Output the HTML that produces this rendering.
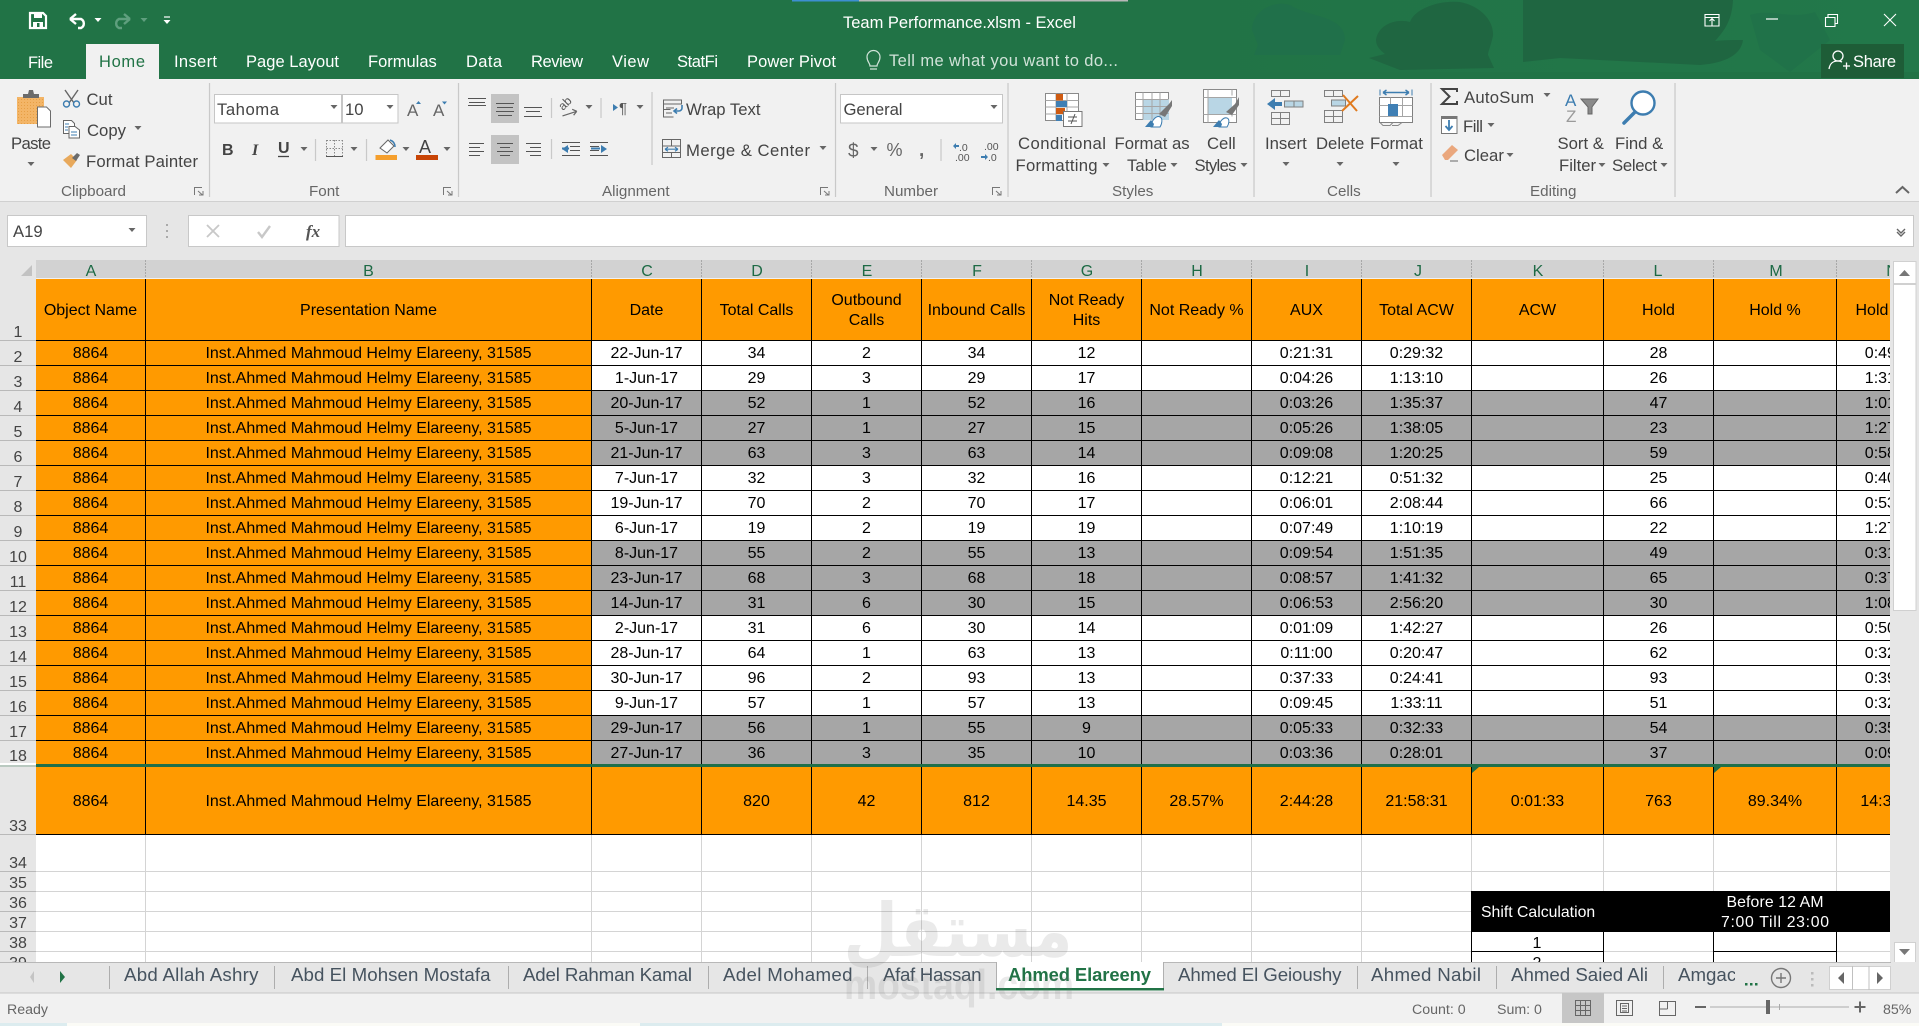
<!DOCTYPE html>
<html><head><meta charset="utf-8"><title>Team Performance.xlsm - Excel</title>
<style>
html,body{margin:0;padding:0;width:1919px;height:1026px;overflow:hidden;background:#f1f1f1}
svg{position:absolute;left:0;top:0;display:block}
svg text{font-family:"Liberation Sans",sans-serif;white-space:pre}
.w{fill:#fff;font-size:16.5px}
.r{fill:#444;font-size:16.7px}
.g{fill:#666;font-size:15.2px}
.n{fill:#444;font-size:16px;text-anchor:middle}
.h{fill:#1d6a45;font-size:16px;text-anchor:middle}
.t{fill:#46535f;font-size:18.7px}
.s{fill:#666;font-size:14.2px}
.m{text-anchor:middle}
#g{position:absolute;left:36px;top:279px;width:1854px;height:683px;overflow:hidden;background:#fff}
table{border-collapse:separate;border-spacing:0;table-layout:fixed;position:absolute;left:0;width:1911px;font:16px "Liberation Sans",sans-serif;color:#000}
td{box-sizing:border-box;padding:2px 0 0;text-align:center;vertical-align:middle;border-right:1px solid #000;border-bottom:1px solid #000;overflow:hidden;white-space:nowrap;line-height:20px}
tr.o td{background:#ff9a00}
td.o{background:#ff9a00}
tr.x td{background:#a6a6a6}
tr.x td.o{background:#ff9a00}
tr.p td{height:25px}
#t2 td{border-color:#d4d4d4}
</style></head><body>
<svg width="1919" height="1026" viewBox="0 0 1919 1026">
<defs>
<path id="c" d="M-3.5-2h7L0 2z"/>
<pattern id="st" width="3" height="3" patternUnits="userSpaceOnUse"><rect width="3" height="3" fill="#f3b567"/><rect width="1" height="1" fill="#e79f45"/></pattern>
<linearGradient id="tb" x1="0" x2="1" y1="0" y2="0"><stop offset="0" stop-color="#217346"/><stop offset="1" stop-color="#22784a"/></linearGradient>
</defs>
<!-- chrome backgrounds -->
<rect width="1919" height="79" fill="#217346"/>
<rect x="1200" width="719" height="72" fill="url(#tb)"/>
<path d="M1252 30C1252 10 1275 0 1290 5 1310 18 1345 15 1345 40L1340 55H1254L1258 45z" fill="#20704a"/>
<path d="M1376 40C1378 25 1395 18 1410 22 1415 8 1440 0 1460 2 1480 6 1494 20 1493 36 1490 48 1488 52 1488 55L1494 68 1400 70 1369 58 1385 54C1380 50 1376 46 1376 40zM1523 0H1733C1732 20 1725 30 1715 41 1725 40 1735 40 1743 40 1741 55 1725 63 1700 65L1560 58 1523 62z" fill="#1f6641"/>
<path d="M1750 15C1770 8 1790 20 1815 12L1830 40 1790 72 1760 50z" fill="#20704a" opacity=".6"/>
<rect x="792" y="0" width="67" height="1.5" fill="#3d8fd1"/><rect x="859" y="0" width="269" height="1.5" fill="#b8b8b8"/>
<rect y="79" width="1919" height="122" fill="#f1f1f1"/>
<rect y="201" width="1919" height="1.5" fill="#d0d0d0"/>
<rect y="202" width="1919" height="76" fill="#e6e6e6"/>
<rect x="86" y="44" width="73" height="35" fill="#f1f1f1"/>
<rect x="1821" y="44" width="83" height="34" fill="#1e5d37"/>

<!-- quick access -->
<path d="M30 13h13l3 3v12H30z" fill="none" stroke="#fff" stroke-width="2.2"/><rect x="34" y="13" width="8" height="5" fill="#fff"/><rect x="33" y="22" width="10" height="6" fill="#fff"/><rect x="37" y="23" width="2.5" height="4" fill="#217346"/>
<path d="M70 19l6-5M70 19l6 5M70 19h11a5 5 0 0 1 0 9h-3" fill="none" stroke="#fff" stroke-width="2.4"/>
<use href="#c" x="98" y="20" fill="#fff"/>
<path d="M130 19l-6-5M130 19l-6 5M130 19h-11a5 5 0 0 0 0 9h3" fill="none" stroke="#5f9f7e" stroke-width="2.4"/>
<use href="#c" x="144" y="20" fill="#5f9f7e"/>
<path d="M164 17h6" stroke="#fff" stroke-width="1.2"/><use href="#c" x="167" y="22" fill="#fff"/>
<text class="w" x="843" y="28">Team Performance.xlsm - Excel</text>
<!-- window buttons -->
<path d="M1705 14.5h14v11.5h-14zM1705 17.5h14M1712 26v-7M1709.5 21l2.5-2.5 2.5 2.5" fill="none" stroke="#fff" stroke-width="1.1"/>
<path d="M1766 19h12" stroke="#fff" stroke-width="1.2"/>
<path d="M1825.5 17.5h9.5v9h-9.5zM1828 17v-2.500h9.500v9h-2.300" fill="none" stroke="#fff" stroke-width="1.1"/>
<path d="M1884 14l12 12M1896 14l-12 12" stroke="#fff" stroke-width="1.1"/>
<!-- tabs -->
<text class="w" x="28" y="68" textLength="25">File</text>
<text x="99" y="67" font-size="16.5" fill="#217346" textLength="46">Home</text>
<text class="w" x="174" y="67" textLength="43">Insert</text>
<text class="w" x="246" y="67" textLength="93">Page Layout</text>
<text class="w" x="368" y="67">Formulas</text>
<text class="w" x="466" y="67" textLength="36">Data</text>
<text class="w" x="531" y="67" textLength="52">Review</text>
<text class="w" x="612" y="67" textLength="37">View</text>
<text class="w" x="677" y="67" textLength="41">StatFi</text>
<text class="w" x="747" y="67" textLength="89">Power Pivot</text>
<path d="M870 66c0-3-3-4-3-9a6.500 6.500 0 0 1 13 0c0 5-3 6-3 9zM870 69h7" fill="none" stroke="#cfe3d8" stroke-width="1.2"/>
<text x="889" y="66" font-size="16.5" fill="#d0e2d8" textLength="229">Tell me what you want to do...</text>
<circle cx="1838" cy="56" r="5" fill="none" stroke="#fff" stroke-width="1.3"/><path d="M1829 69c1-6 4-8 9-8 2 0 3 .5 4 1M1843 66h7M1846.500 62.500v7" fill="none" stroke="#fff" stroke-width="1.3"/>
<text class="w" x="1853" y="67" textLength="43">Share</text>

<!-- group separators -->
<g stroke="#c9c9c9" stroke-width="1.2">
<path d="M209.500 83v114M458.500 83v114M835.500 83v114M1008 83v114M1254 83v114M1431 83v114M1675 83v114"/>
<path d="M551.500 98v20M551.500 139v20M601 98v20M652 92v73M941 139v22M315.500 139v22M366.500 139v22"/>
</g>
<!-- group labels -->
<text class="g" x="61" y="196">Clipboard</text><text class="g" x="309" y="196">Font</text><text class="g" x="602" y="196">Alignment</text><text class="g" x="884" y="196">Number</text><text class="g" x="1112" y="196">Styles</text><text class="g" x="1327" y="196">Cells</text><text class="g" x="1530" y="196">Editing</text>
<g fill="none" stroke="#777" stroke-width="1"><path d="M194.500 195v-7.500h7.500M198 191l4.500 4M199 195h4v-4M443.500 195v-7.500h7.500M447 191l4.500 4M448 195h4v-4M820.500 195v-7.500h7.500M824 191l4.500 4M825 195h4v-4M992.500 195v-7.500h7.500M996 191l4.500 4M997 195h4v-4"/></g>
<path d="M1896 193l6.500-6 6.500 6" fill="none" stroke="#666" stroke-width="2"/>

<!-- clipboard -->
<rect x="17" y="97" width="27" height="27" fill="url(#st)"/><path d="M23 98v-4h5l1-4h4l1 4h5v4z" fill="#6b6b6b"/>
<path d="M37.500 107h9l4 4v16h-13z" fill="#fff" stroke="#6b6b6b"/>
<text class="r" x="11" y="149" textLength="40">Paste</text><use href="#c" x="31" y="164" fill="#666"/>
<path d="M65 90l9 13M78 90l-9 13" stroke="#666" stroke-width="1.400"/><circle cx="66.500" cy="104" r="3" fill="none" stroke="#3d7db0" stroke-width="1.400"/><circle cx="76.500" cy="104" r="3" fill="none" stroke="#3d7db0" stroke-width="1.400"/>
<text class="r" x="86.500" y="105">Cut</text>
<path d="M63.500 120.500h8l3 3v10h-11z" fill="#fff" stroke="#666"/><path d="M69 126.500h6l4.500 3.500v8H69z" fill="#fff" stroke="#666"/><path d="M65 124h4M65 127h3M65 130h3M71 132h6M71 135h6" stroke="#3d7db0"/>
<text class="r" x="87" y="136">Copy</text><use href="#c" x="138" y="128" fill="#666"/>
<path d="M63 160l8-6 6 6-6 8z" fill="#e8a95c"/><path d="M72 158l5-5 3 2-4 6z" fill="#6b6b6b"/>
<text class="r" x="86" y="167" textLength="112">Format Painter</text>

<!-- font -->
<rect x="214.500" y="94.500" width="127" height="28.500" fill="#fff" stroke="#c6c6c6"/><rect x="342.500" y="94.500" width="55.500" height="28.500" fill="#fff" stroke="#c6c6c6"/>
<text class="r" x="217" y="115" textLength="62">Tahoma</text><use href="#c" x="334" y="107" fill="#666"/>
<text class="r" x="345" y="115">10</text><use href="#c" x="390" y="107" fill="#666"/>
<text x="407" y="116" font-size="17" fill="#666">A</text><path d="M416 104l2.500-3 2.500 3z" fill="#3d7db0"/>
<text x="433" y="116" font-size="17" fill="#666">A</text><path d="M442 101.500h5l-2.500 3z" fill="#3d7db0"/>
<text x="222" y="155" font-size="16" font-weight="bold" fill="#444">B</text>
<text x="252" y="155" font-size="16" font-weight="bold" font-style="italic" fill="#444" style="font-family:'Liberation Serif',serif">I</text>
<text x="278" y="153" font-size="16" font-weight="bold" fill="#444">U</text><path d="M278 156.500h11" stroke="#444" stroke-width="1.300"/>
<use href="#c" x="304" y="149" fill="#666"/>
<path d="M326.500 140.500h16M326.500 148.500h16M326.500 140v16M334.500 140v16M342.500 140v16" stroke="#888" stroke-dasharray="1.500 1.500" fill="none"/><path d="M326 156.500h17" stroke="#555"/>
<use href="#c" x="354" y="149" fill="#666"/>
<path d="M380 148l8-8 6 6-7 7z" fill="#fff" stroke="#666"/><path d="M390 140c3 1 5 3 5 7" fill="none" stroke="#3d7db0" stroke-width="1.500"/><rect x="375.500" y="155" width="21.500" height="5" fill="#f59f2d"/>
<use href="#c" x="406" y="149" fill="#666"/>
<text x="419" y="153" font-size="18" fill="#444">A</text><rect x="416" y="155" width="22" height="5" fill="#c84406"/>
<use href="#c" x="447" y="149" fill="#666"/>

<!-- alignment -->
<rect x="491" y="94" width="28" height="29" fill="#c3c3c3"/><rect x="491" y="135" width="28" height="29" fill="#c3c3c3"/>
<g stroke="#555" stroke-width="1" fill="none">
<path d="M468 98.500h18M469 102.500h16M468 105.500h18"/>
<path d="M496 103.500h18M497 107.500h16M496 111.500h18M498 115.500h14"/>
<path d="M524 107.500h18M526 111.500h14M524 116.500h18"/>
<path d="M469 143.500h15M469 147.500h11M469 151.500h15M469 155.500h11"/>
<path d="M497 143.500h16M500 147.500h10M497 151.500h16M500 155.500h10"/>
<path d="M526 143.500h15M530 147.500h11M526 151.500h15M530 155.500h11"/>
<path d="M562 142.500h18M570 146.500h10M570 150.500h10M562 155.500h18M590 142.500h18M590 146.500h9M590 150.500h9M590 155.500h18"/>
</g>
<path d="M568 145l-6 4 6 4zM601 145l6 4-6 4z" fill="#3d7db0"/><path d="M562 148.500h7M600 148.500h-9" stroke="#3d7db0" stroke-width="2"/>
<text x="0" y="0" font-size="12" fill="#555" transform="translate(563 111) rotate(-45)">ab</text>
<path d="M562 114l15-1M577 113l-4-3M577 113l-4 3" stroke="#666" stroke-width="1.200" fill="none" transform="rotate(-14 570 113)"/>
<use href="#c" x="589" y="107" fill="#666"/>
<path d="M613 104l5 3.500-5 3.500z" fill="#3d7db0"/><text x="619" y="113" font-size="15" fill="#555">¶</text><use href="#c" x="640" y="107" fill="#666"/>
<rect x="663.500" y="100" width="18" height="4" fill="none" stroke="#666"/><path d="M663.500 104v13h10M666 108h8M666 113h6M663.500 109.500h7" fill="none" stroke="#666"/><path d="M682 105v3a3 3 0 0 1-3 3h-4M677 108.500l-3 2.500 3 2.500" fill="none" stroke="#3d7db0" stroke-width="1.600"/>
<text class="r" x="686" y="115">Wrap Text</text>
<path d="M662.500 139.500h18v18h-18zM662.500 146h18M662.500 152.500h18M671.500 139.500v6M671.500 152.500v5" fill="none" stroke="#666"/><path d="M665 149.200h13M665 149.200l3-2M665 149.200l3 2M678 149.200l-3-2M678 149.200l-3 2" stroke="#3d7db0" stroke-width="1.200" fill="none"/>
<text class="r" x="686" y="156" textLength="124">Merge &amp; Center</text><use href="#c" x="823" y="148" fill="#666"/>

<!-- number -->
<rect x="840.500" y="94.500" width="162" height="28.500" fill="#fff" stroke="#c6c6c6"/>
<text class="r" x="843.500" y="115" textLength="59">General</text><use href="#c" x="994" y="107" fill="#666"/>
<text x="848" y="157" font-size="19" fill="#666">$</text><use href="#c" x="874" y="149" fill="#666"/>
<text x="886.500" y="156" font-size="18" fill="#666" textLength="16">%</text><text x="919" y="156" font-size="19" font-weight="bold" fill="#666">,</text>
<text x="959" y="151" font-size="10.500" fill="#555">.0</text><text x="955" y="161" font-size="10.500" fill="#555">.00</text><path d="M953 146l3-3v2h3v2h-3v2z" fill="#3d7db0"/>
<text x="984" y="150" font-size="10.500" fill="#555">.00</text><text x="988" y="161" font-size="10.500" fill="#555">.0</text><path d="M988 157l-3-3v2h-4v2h4v2z" fill="#3d7db0"/>

<!-- styles -->
<g>
<rect x="1045.500" y="93.500" width="33" height="27" fill="#fff" stroke="#8a8a8a"/><path d="M1056 93.500v27M1067 93.500v27M1045.500 100.500h33M1045.500 107h33M1045.500 114h33" stroke="#a5a5a5"/>
<rect x="1056" y="94" width="7" height="6.500" fill="#cf5b12"/><rect x="1056" y="101" width="11" height="6" fill="#3f7fb4"/><rect x="1056" y="108" width="9" height="6" fill="#cf5b12"/><rect x="1056" y="115" width="6" height="6" fill="#3f7fb4"/>
<rect x="1063.500" y="111.500" width="18.500" height="15" fill="#fff" stroke="#777"/><path d="M1068 117h9M1068 121h9M1075 114l-4 10" stroke="#555"/>
<rect x="1135.500" y="92.500" width="33" height="27" fill="#fff" stroke="#8a8a8a"/><rect x="1143" y="99" width="26" height="21" fill="#b9d6e5"/><path d="M1143 92.500v27M1152 92.500v27M1160 92.500v27M1135.500 99.500h33M1135.500 106.500h33M1135.500 113.500h33" stroke="#a5a5a5"/>
<path d="M1159 114l10-10 3-4v6l-7 11z" fill="#777"/><path d="M1151 127c0-7 6-12 9-10 3 1 2 7 0 10z" fill="#fff" stroke="#3d7db0"/><path d="M1145 127l6-7 3 4-1 3z" fill="#3d7db0"/>
<rect x="1203.500" y="89.500" width="33" height="33" fill="#fff" stroke="#8a8a8a"/><rect x="1208" y="98" width="24" height="16" fill="#b9d6e5"/><path d="M1208 89.500v33M1232 89.500v6M1203.500 97.500h33M1203.500 114.500h33M1208 114.500v8M1232 114.500v2" stroke="#a5a5a5"/>
<path d="M1226 112l9-8 4-7v8l-7 10z" fill="#777"/><path d="M1219 127c0-6 5-10 8-9 3 1 2 6 0 9z" fill="#fff" stroke="#3d7db0"/><path d="M1213 127l6-7 3 4-1 3z" fill="#3d7db0"/>
</g>
<text class="r" x="1018" y="149" textLength="88">Conditional</text><text class="r" x="1015.500" y="171" textLength="82">Formatting</text><use href="#c" x="1106" y="165" fill="#666"/>
<text class="r" x="1114.500" y="149">Format as</text><text class="r" x="1127" y="171">Table</text><use href="#c" x="1174" y="165" fill="#666"/>
<text class="r" x="1207" y="149">Cell</text><text class="r" x="1194.500" y="171" textLength="42">Styles</text><use href="#c" x="1244" y="165" fill="#666"/>

<!-- cells -->
<path d="M1271.500 90.500h18v6h-18zM1280.500 90.500v6M1271.500 112.500h18v12h-18zM1271.500 118.500h18M1280.500 112.500v12" fill="none" stroke="#808080"/>
<rect x="1284.500" y="101" width="18.500" height="6" fill="#b9d6e5" stroke="#808080"/><path d="M1294 101v6" stroke="#808080"/>
<path d="M1267 104l8-6v4h7v4h-7v4z" fill="#3d7db0"/>
<text class="r" x="1265" y="149">Insert</text><use href="#c" x="1286" y="164" fill="#666"/>
<path d="M1324.500 90.500h18v6h-18zM1333.500 90.500v6M1324.500 110.500h18v12h-18zM1324.500 116.500h18M1333.500 110.500v12" fill="none" stroke="#808080"/>
<rect x="1331.500" y="100" width="14" height="6" fill="#b9d6e5" stroke="#808080"/>
<path d="M1343 95l14 16M1358 96l-16 15" stroke="#e07a1e" stroke-width="2"/>
<text class="r" x="1316" y="149">Delete</text><use href="#c" x="1340" y="164" fill="#666"/>
<rect x="1379.500" y="97.500" width="33" height="25" fill="#fff" stroke="#808080"/><path d="M1379.500 105.500h33M1379.500 116.500h33M1390.500 97.500v19M1402.500 97.500v19" stroke="#a5a5a5"/><rect x="1388" y="104" width="10" height="12" fill="#3f7fb4"/>
<path d="M1380 89.500v6M1412 89.500v6" stroke="#3d7db0"/><path d="M1383 92.500h26M1383 92.500l3.500-2.500M1383 92.500l3.500 2.500M1409 92.500l-3.500-2.500M1409 92.500l-3.500 2.500" stroke="#3d7db0" stroke-width="1.400" fill="none"/>
<path d="M1380 122.500l3 3h7l3-3M1392 125.500h6l4-3" fill="none" stroke="#888"/>
<text class="r" x="1370" y="149">Format</text><use href="#c" x="1396" y="164" fill="#666"/>

<!-- editing -->
<path d="M1457 92v-3h-15l7.500 7.500-7.500 7.500h15v-3" fill="none" stroke="#444" stroke-width="2"/>
<text class="r" x="1464" y="103" textLength="70">AutoSum</text><use href="#c" x="1547" y="95" fill="#666"/>
<rect x="1441.500" y="116.500" width="15.500" height="17" fill="#fff" stroke="#777"/><rect x="1441" y="116" width="16" height="3" fill="#777"/><path d="M1449 120v9M1445.500 126l3.500 4 3.500-4" fill="none" stroke="#3d7db0" stroke-width="1.800"/>
<text class="r" x="1463" y="132" textLength="20">Fill</text><use href="#c" x="1491" y="125" fill="#666"/>
<path d="M1442 155l10-10 6 5-10 10h-3z" fill="#eaa77d"/><path d="M1450 161h8" stroke="#666"/>
<text class="r" x="1464" y="161">Clear</text><use href="#c" x="1510" y="155" fill="#666"/>
<text x="1565" y="106" font-size="17" fill="#3d7db0">A</text><text x="1566" y="122" font-size="17" fill="#9a9a9a">Z</text>
<path d="M1581 99h17l-6 8v7h-4v-7z" fill="#8a8a8a" stroke="#666"/>
<text class="r" x="1557.500" y="149">Sort &amp;</text><text class="r" x="1559" y="171">Filter</text><use href="#c" x="1602" y="165" fill="#666"/>
<circle cx="1643" cy="103" r="11.500" fill="#fff" stroke="#3d7db0" stroke-width="2.400"/><path d="M1635 112l-11 11" stroke="#3d7db0" stroke-width="3.500" stroke-linecap="round"/>
<text class="r" x="1615" y="149">Find &amp;</text><text class="r" x="1612" y="171" textLength="45">Select</text><use href="#c" x="1664" y="165" fill="#666"/>

<!-- formula bar -->
<rect x="7.500" y="215.500" width="139" height="31" fill="#fff" stroke="#c8c8c8"/><text class="r" x="13" y="237">A19</text><use href="#c" x="132" y="230" fill="#666"/>
<g fill="#aaa"><rect x="166" y="224" width="2" height="2"/><rect x="166" y="230" width="2" height="2"/><rect x="166" y="236" width="2" height="2"/></g>
<rect x="188.500" y="215.500" width="150.500" height="31" fill="#fff" stroke="#c8c8c8"/>
<path d="M207 225l12 12M219 225l-12 12" stroke="#c8c8c8" stroke-width="1.800"/><path d="M258 232l4 5 8-11" fill="none" stroke="#c8c8c8" stroke-width="2.400"/>
<text x="306" y="237" font-size="17" font-style="italic" font-weight="bold" fill="#555" style="font-family:'Liberation Serif',serif">fx</text>
<rect x="345.500" y="215.500" width="1568" height="31" fill="#fff" stroke="#c8c8c8"/><path d="M1897 229l4 4 4-4M1897 232l4 4 4-4" fill="none" stroke="#666" stroke-width="1.400"/>

<!-- column headers -->
<rect x="36" y="260" width="1855" height="18" fill="#d2d2d2"/>
<path d="M32 265v11H21z" fill="#c2c2c2"/>
<g stroke="#a8a8a8" stroke-dasharray="2 1"><path d="M145.500 260v18M591.500 260v18M701.500 260v18M811.500 260v18M921.500 260v18M1031.500 260v18M1141.500 260v18M1251.500 260v18M1361.500 260v18M1471.500 260v18M1603.500 260v18M1713.500 260v18M1836.500 260v18"/></g>
<text class="h" x="91" y="276">A</text><text class="h" x="368.500" y="276">B</text><text class="h" x="647" y="276">C</text><text class="h" x="757" y="276">D</text><text class="h" x="867" y="276">E</text><text class="h" x="977" y="276">F</text><text class="h" x="1087" y="276">G</text><text class="h" x="1197" y="276">H</text><text class="h" x="1307" y="276">I</text><text class="h" x="1418" y="276">J</text><text class="h" x="1538" y="276">K</text><text class="h" x="1658" y="276">L</text><text class="h" x="1776" y="276">M</text><text class="h" x="1892" y="276">N</text>
<!-- row headers -->
<rect x="0" y="278" width="36" height="684" fill="#e6e6e6"/>
<g stroke="#b9b9b9"><path d="M0 340.500h36M0 365.500h36M0 390.500h36M0 415.500h36M0 440.500h36M0 465.500h36M0 490.500h36M0 515.500h36M0 540.500h36M0 565.500h36M0 590.500h36M0 615.500h36M0 640.500h36M0 665.500h36M0 690.500h36M0 715.500h36M0 740.500h36M0 834.500h36M0 871.500h36M0 891.500h36M0 911.500h36M0 931.500h36M0 951.500h36"/></g>
<rect x="0" y="763" width="36" height="2" fill="#fff"/><rect x="0" y="765" width="36" height="2" fill="#b9c9c0"/>
<text class="n" x="18" y="337">1</text><text class="n" x="18" y="362">2</text><text class="n" x="18" y="387">3</text><text class="n" x="18" y="412">4</text><text class="n" x="18" y="437">5</text><text class="n" x="18" y="462">6</text><text class="n" x="18" y="487">7</text><text class="n" x="18" y="512">8</text><text class="n" x="18" y="537">9</text><text class="n" x="18" y="562">10</text><text class="n" x="18" y="587">11</text><text class="n" x="18" y="612">12</text><text class="n" x="18" y="637">13</text><text class="n" x="18" y="662">14</text><text class="n" x="18" y="687">15</text><text class="n" x="18" y="712">16</text><text class="n" x="18" y="737">17</text><text class="n" x="18" y="761">18</text>
<text class="n" x="18" y="831">33</text><text class="n" x="18" y="868">34</text><text class="n" x="18" y="888">35</text><text class="n" x="18" y="908">36</text><text class="n" x="18" y="928">37</text><text class="n" x="18" y="948">38</text><text class="n" x="18" y="968">39</text>

<!-- v-scroll -->
<rect x="1890" y="260" width="29" height="703" fill="#e6e6e6"/>
<rect x="1893.500" y="261.500" width="22.500" height="22" fill="#fff" stroke="#d0d0d0"/><path d="M1899 276l5.500-6 5.500 6z" fill="#777"/>
<rect x="1893.500" y="284.500" width="22.500" height="326" fill="#fff" stroke="#d0d0d0"/>
<rect x="1894.500" y="942.500" width="21" height="20" fill="#fff" stroke="#d0d0d0"/><path d="M1899 949l5.500 6 5.500-6z" fill="#777"/>
</svg>

<div id="g">
<table style="top:0"><colgroup><col style="width:110px"><col style="width:446px"><col style="width:110px"><col style="width:110px"><col style="width:110px"><col style="width:110px"><col style="width:110px"><col style="width:110px"><col style="width:110px"><col style="width:110px"><col style="width:132px"><col style="width:110px"><col style="width:123px"><col style="width:110px"></colgroup>
<tr class="o" style="height:62px"><td style="height:62px">Object Name</td><td>Presentation Name</td><td>Date</td><td>Total Calls</td><td>Outbound<br>Calls</td><td>Inbound Calls</td><td>Not Ready<br>Hits</td><td>Not Ready %</td><td>AUX</td><td>Total ACW</td><td>ACW</td><td>Hold</td><td>Hold %</td><td>Hold Time</td></tr>
<tr class="p"><td class="o">8864</td><td class="o">Inst.Ahmed Mahmoud Helmy Elareeny, 31585</td><td>22-Jun-17</td><td>34</td><td>2</td><td>34</td><td>12</td><td></td><td>0:21:31</td><td>0:29:32</td><td></td><td>28</td><td></td><td>0:49:10</td></tr>
<tr class="p"><td class="o">8864</td><td class="o">Inst.Ahmed Mahmoud Helmy Elareeny, 31585</td><td>1-Jun-17</td><td>29</td><td>3</td><td>29</td><td>17</td><td></td><td>0:04:26</td><td>1:13:10</td><td></td><td>26</td><td></td><td>1:31:10</td></tr>
<tr class="p x"><td class="o">8864</td><td class="o">Inst.Ahmed Mahmoud Helmy Elareeny, 31585</td><td>20-Jun-17</td><td>52</td><td>1</td><td>52</td><td>16</td><td></td><td>0:03:26</td><td>1:35:37</td><td></td><td>47</td><td></td><td>1:01:10</td></tr>
<tr class="p x"><td class="o">8864</td><td class="o">Inst.Ahmed Mahmoud Helmy Elareeny, 31585</td><td>5-Jun-17</td><td>27</td><td>1</td><td>27</td><td>15</td><td></td><td>0:05:26</td><td>1:38:05</td><td></td><td>23</td><td></td><td>1:27:10</td></tr>
<tr class="p x"><td class="o">8864</td><td class="o">Inst.Ahmed Mahmoud Helmy Elareeny, 31585</td><td>21-Jun-17</td><td>63</td><td>3</td><td>63</td><td>14</td><td></td><td>0:09:08</td><td>1:20:25</td><td></td><td>59</td><td></td><td>0:58:10</td></tr>
<tr class="p"><td class="o">8864</td><td class="o">Inst.Ahmed Mahmoud Helmy Elareeny, 31585</td><td>7-Jun-17</td><td>32</td><td>3</td><td>32</td><td>16</td><td></td><td>0:12:21</td><td>0:51:32</td><td></td><td>25</td><td></td><td>0:40:10</td></tr>
<tr class="p"><td class="o">8864</td><td class="o">Inst.Ahmed Mahmoud Helmy Elareeny, 31585</td><td>19-Jun-17</td><td>70</td><td>2</td><td>70</td><td>17</td><td></td><td>0:06:01</td><td>2:08:44</td><td></td><td>66</td><td></td><td>0:53:10</td></tr>
<tr class="p"><td class="o">8864</td><td class="o">Inst.Ahmed Mahmoud Helmy Elareeny, 31585</td><td>6-Jun-17</td><td>19</td><td>2</td><td>19</td><td>19</td><td></td><td>0:07:49</td><td>1:10:19</td><td></td><td>22</td><td></td><td>1:27:10</td></tr>
<tr class="p x"><td class="o">8864</td><td class="o">Inst.Ahmed Mahmoud Helmy Elareeny, 31585</td><td>8-Jun-17</td><td>55</td><td>2</td><td>55</td><td>13</td><td></td><td>0:09:54</td><td>1:51:35</td><td></td><td>49</td><td></td><td>0:31:10</td></tr>
<tr class="p x"><td class="o">8864</td><td class="o">Inst.Ahmed Mahmoud Helmy Elareeny, 31585</td><td>23-Jun-17</td><td>68</td><td>3</td><td>68</td><td>18</td><td></td><td>0:08:57</td><td>1:41:32</td><td></td><td>65</td><td></td><td>0:37:10</td></tr>
<tr class="p x"><td class="o">8864</td><td class="o">Inst.Ahmed Mahmoud Helmy Elareeny, 31585</td><td>14-Jun-17</td><td>31</td><td>6</td><td>30</td><td>15</td><td></td><td>0:06:53</td><td>2:56:20</td><td></td><td>30</td><td></td><td>1:08:10</td></tr>
<tr class="p"><td class="o">8864</td><td class="o">Inst.Ahmed Mahmoud Helmy Elareeny, 31585</td><td>2-Jun-17</td><td>31</td><td>6</td><td>30</td><td>14</td><td></td><td>0:01:09</td><td>1:42:27</td><td></td><td>26</td><td></td><td>0:50:10</td></tr>
<tr class="p"><td class="o">8864</td><td class="o">Inst.Ahmed Mahmoud Helmy Elareeny, 31585</td><td>28-Jun-17</td><td>64</td><td>1</td><td>63</td><td>13</td><td></td><td>0:11:00</td><td>0:20:47</td><td></td><td>62</td><td></td><td>0:32:10</td></tr>
<tr class="p"><td class="o">8864</td><td class="o">Inst.Ahmed Mahmoud Helmy Elareeny, 31585</td><td>30-Jun-17</td><td>96</td><td>2</td><td>93</td><td>13</td><td></td><td>0:37:33</td><td>0:24:41</td><td></td><td>93</td><td></td><td>0:39:10</td></tr>
<tr class="p"><td class="o">8864</td><td class="o">Inst.Ahmed Mahmoud Helmy Elareeny, 31585</td><td>9-Jun-17</td><td>57</td><td>1</td><td>57</td><td>13</td><td></td><td>0:09:45</td><td>1:33:11</td><td></td><td>51</td><td></td><td>0:32:10</td></tr>
<tr class="p x"><td class="o">8864</td><td class="o">Inst.Ahmed Mahmoud Helmy Elareeny, 31585</td><td>29-Jun-17</td><td>56</td><td>1</td><td>55</td><td>9</td><td></td><td>0:05:33</td><td>0:32:33</td><td></td><td>54</td><td></td><td>0:35:10</td></tr>
<tr class="p x"><td class="o">8864</td><td class="o">Inst.Ahmed Mahmoud Helmy Elareeny, 31585</td><td>27-Jun-17</td><td>36</td><td>3</td><td>35</td><td>10</td><td></td><td>0:03:36</td><td>0:28:01</td><td></td><td>37</td><td></td><td>0:09:10</td></tr>
</table>
<div style="position:absolute;left:0;top:485px;width:1854px;height:3px;background:#1f6f4a"></div>
<table style="top:488px"><colgroup><col style="width:110px"><col style="width:446px"><col style="width:110px"><col style="width:110px"><col style="width:110px"><col style="width:110px"><col style="width:110px"><col style="width:110px"><col style="width:110px"><col style="width:110px"><col style="width:132px"><col style="width:110px"><col style="width:123px"><col style="width:110px"></colgroup>
<tr class="o"><td style="height:68px">8864</td><td>Inst.Ahmed Mahmoud Helmy Elareeny, 31585</td><td></td><td>820</td><td>42</td><td>812</td><td>14.35</td><td>28.57%</td><td>2:44:28</td><td>21:58:31</td><td>0:01:33</td><td>763</td><td>89.34%</td><td>14:32:10</td></tr>
</table>
<table id="t2" style="top:556px"><colgroup><col style="width:110px"><col style="width:446px"><col style="width:110px"><col style="width:110px"><col style="width:110px"><col style="width:110px"><col style="width:110px"><col style="width:110px"><col style="width:110px"><col style="width:110px"><col style="width:132px"><col style="width:110px"><col style="width:123px"><col style="width:110px"></colgroup>
<tr><td style="height:37px"></td><td></td><td></td><td></td><td></td><td></td><td></td><td></td><td></td><td></td><td></td><td></td><td></td><td></td></tr>
<tr><td style="height:20px"></td><td></td><td></td><td></td><td></td><td></td><td></td><td></td><td></td><td></td><td></td><td></td><td></td><td></td></tr>
<tr><td style="height:20px"></td><td></td><td></td><td></td><td></td><td></td><td></td><td></td><td></td><td></td><td></td><td></td><td></td><td></td></tr>
<tr><td style="height:20px"></td><td></td><td></td><td></td><td></td><td></td><td></td><td></td><td></td><td></td><td></td><td></td><td></td><td></td></tr>
<tr><td style="height:20px"></td><td></td><td></td><td></td><td></td><td></td><td></td><td></td><td></td><td></td><td></td><td></td><td></td><td></td></tr>
<tr><td style="height:20px"></td><td></td><td></td><td></td><td></td><td></td><td></td><td></td><td></td><td></td><td></td><td></td><td></td><td></td></tr>
</table>
<svg width="1854" height="683" style="left:0;top:0" viewBox="0 0 1854 683">
<path d="M1436 488h7l-7 6zM1678 488h7l-7 6z" fill="#1f6f4a"/>
<rect x="1435" y="612" width="419" height="41" fill="#000"/>
<text x="1445" y="638" font-size="15.800" fill="#fff">Shift Calculation</text>
<text x="1739" y="628" font-size="15.800" fill="#fff" text-anchor="middle" textLength="97">Before 12 AM</text>
<text x="1739" y="648" font-size="15.800" fill="#fff" text-anchor="middle" textLength="108">7:00 Till 23:00</text>
<rect x="1435" y="653" width="133" height="30" fill="#fff"/><rect x="1678" y="653" width="123" height="30" fill="#fff"/>
<path d="M1435.500 653v30M1567.500 653v30M1677.500 653v30M1800.500 653v30M1435 672.500h133M1678 672.500h123" stroke="#000" fill="none"/>
<text x="1501" y="669" font-size="16" fill="#000" text-anchor="middle">1</text>
<text x="1501" y="689" font-size="16" fill="#000" text-anchor="middle">2</text>
</svg>
</div>

<svg width="1919" height="1026" viewBox="0 0 1919 1026" style="pointer-events:none">
<!-- sheet tabs -->
<rect y="962" width="1919" height="31" fill="#e6e6e6"/><rect y="962" width="996" height="1" fill="#b8b8b8"/><rect x="1164" y="962" width="727" height="1" fill="#b8b8b8"/>
<rect y="992.500" width="1919" height="1" fill="#c6c6c6"/>
<path d="M34 971l-4 6 4 6z" fill="#c4c4c4"/><path d="M60 971l5 6-5 6z" fill="#217346"/>
<g stroke="#adadad"><path d="M109.500 966v23M274.500 966v23M508.500 966v23M708.500 966v23M867.500 966v23M1357.500 966v23M1496.500 966v23M1663.500 966v23"/></g>
<text class="t" x="124" y="981" textLength="134.500">Abd Allah Ashry</text>
<text class="t" x="291" y="981" textLength="199.500">Abd El Mohsen Mostafa</text>
<text class="t" x="523" y="981" textLength="169">Adel Rahman Kamal</text>
<text class="t" x="723" y="981" textLength="129.500">Adel Mohamed</text>
<text class="t" x="883" y="981" textLength="98.500">Afaf Hassan</text>
<rect x="996" y="962" width="168" height="29" fill="#fff"/><path d="M996.500 962v28M1163.500 962v28" stroke="#b0b0b0"/><rect x="996" y="988" width="168" height="2.500" fill="#217346"/>
<text x="1008" y="981" font-size="18.400" font-weight="bold" fill="#217346" textLength="143">Ahmed Elareeny</text>
<text class="t" x="1178" y="981" textLength="163.500">Ahmed El Geioushy</text>
<text class="t" x="1371" y="981" textLength="110">Ahmed Nabil</text>
<text class="t" x="1511" y="981" textLength="137">Ahmed Saied Ali</text>
<text class="t" x="1678" y="981">Amgac</text>
<rect x="1735" y="964" width="8" height="26" fill="#e6e6e6"/>
<g fill="#217346"><rect x="1745" y="983" width="2.500" height="2.500"/><rect x="1750" y="983" width="2.500" height="2.500"/><rect x="1755" y="983" width="2.500" height="2.500"/></g>
<circle cx="1781" cy="978" r="9.500" fill="none" stroke="#777" stroke-width="1.400"/><path d="M1776 978h10M1781 973v10" stroke="#777" stroke-width="1.400"/>
<g fill="#bbb"><rect x="1811" y="972" width="2.500" height="2.500"/><rect x="1811" y="978" width="2.500" height="2.500"/><rect x="1811" y="984" width="2.500" height="2.500"/></g>
<rect x="1829.500" y="966.500" width="61" height="23" fill="#fff" stroke="#d0d0d0"/><path d="M1852.500 966v24M1869 966v24" stroke="#c0c0c0"/>
<path d="M1838 978l6-6v12zM1883 978l-6-6v12z" fill="#666"/>
<!-- status bar -->
<rect y="993.500" width="1919" height="29.500" fill="#f1f1f1"/>
<text class="s" x="7" y="1014">Ready</text>
<text class="s" x="1412" y="1014">Count: 0</text>
<text class="s" x="1497" y="1014">Sum: 0</text>
<rect x="1562" y="993" width="42" height="30" fill="#c6c6c6"/>
<path d="M1575.500 1000.500h15v15h-15zM1575.500 1005.500h15M1575.500 1010.500h15M1580.500 1000.500v15M1585.500 1000.500v15" fill="none" stroke="#666"/>
<path d="M1616.500 1000.500h16v15h-16z" fill="none" stroke="#666"/><path d="M1620.500 1003.500h8v9h-8zM1622 1006h5M1622 1008.500h5M1622 1011h5" fill="none" stroke="#666"/>
<path d="M1659.500 1001.500h16v14h-16zM1667.500 1001.500v7.500M1659.500 1009h8" fill="none" stroke="#666"/>
<path d="M1695 1007h11M1854.500 1007h11M1860 1001.500v11" stroke="#666" stroke-width="2"/>
<path d="M1710 1007h139M1779.500 1004v6" stroke="#aaa"/>
<rect x="1766" y="1000" width="4" height="14" fill="#666"/>
<text class="s" x="1883" y="1014">85%</text>
<!-- bottom strip -->
<rect y="1023" width="1919" height="3" fill="#fbfbf6"/><rect y="1023" width="67" height="3" fill="#dcecef"/><rect x="640" y="1023" width="582" height="3" fill="#dcecef"/>
<!-- watermark -->
<g opacity=".15" fill="#777">
<text x="958" y="956" font-size="74" font-weight="bold" text-anchor="middle" textLength="229" lengthAdjust="spacingAndGlyphs" style="font-family:'DejaVu Sans',sans-serif" direction="rtl">مستقل</text>
<text x="844" y="999" font-size="42" font-weight="bold" textLength="230" lengthAdjust="spacingAndGlyphs">mostaql.com</text>
</g>
</svg>
</body></html>
